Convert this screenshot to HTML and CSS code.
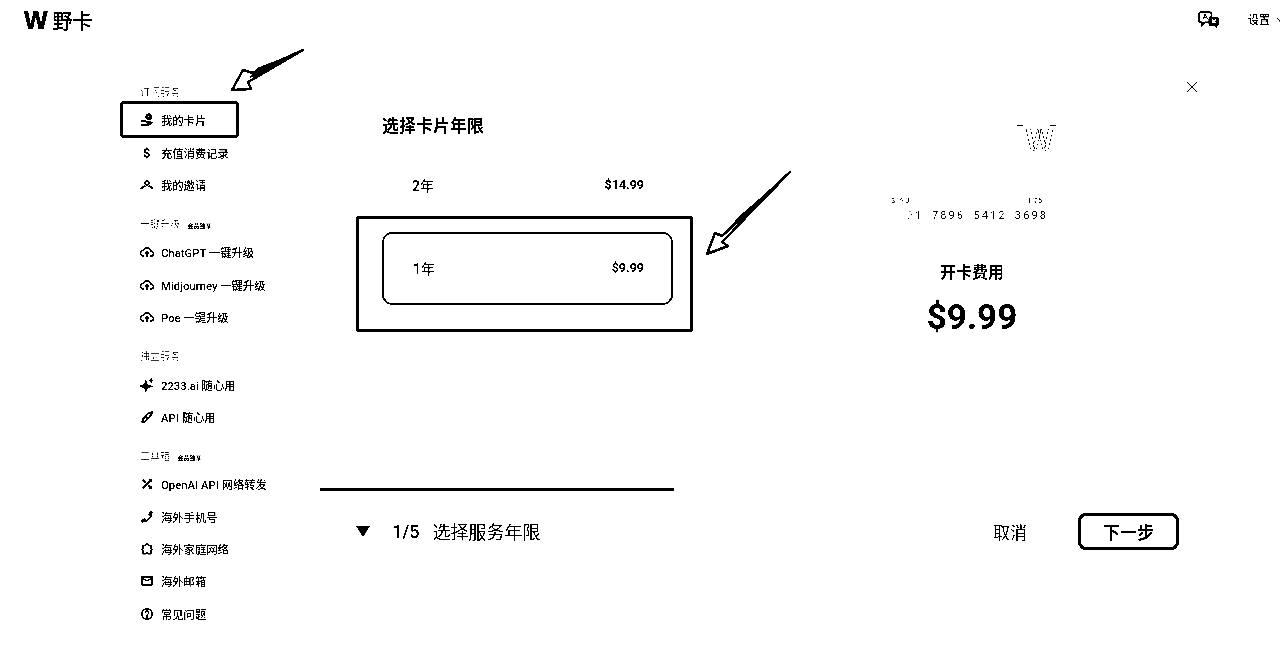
FILE: index.html
```html
<!DOCTYPE html>
<html lang="zh-CN">
<head>
    <meta charset="UTF-8">
    <meta name="viewport" content="width=device-width, initial-scale=1.0">
    <title>野卡</title>
    <link rel="stylesheet" href="styles.css">
</head>
<body>

    <svg class="icon-defs" width="0" height="0">
        <symbol id="i-cloud" viewBox="0 0 24 24"><path d="M19.35 10.04C18.67 6.59 15.64 4 12 4 9.11 4 6.6 5.64 5.35 8.04 2.34 8.36 0 10.91 0 14c0 3.31 2.69 6 6 6h1v-2H6c-2.21 0-4-1.79-4-4 0-2.05 1.53-3.76 3.56-3.97l1.07-.11.5-.95C8.08 7.14 9.94 6 12 6c2.62 0 4.88 1.86 5.39 4.43l.3 1.5 1.53.11c1.56.1 2.78 1.41 2.78 2.96 0 1.65-1.35 3-3 3h-2v2h2c2.76 0 5-2.24 5-5 0-2.64-2.05-4.78-4.65-4.96zM7.5 14h3v7h3v-7h3L12 9.5z"/></symbol>
    </svg>

    <header class="topbar">
        <a class="brand" href="#"><span class="brand-w">W</span><span class="brand-name">野卡</span></a>
        <div class="topbar-right">
            <svg class="lang-icon" viewBox="0 0 22 18">
                <path class="lang-back" d="M3 1h9a2 2 0 0 1 2 2v7a2 2 0 0 1-2 2H7l-3 3v-3H3a2 2 0 0 1-2-2V3a2 2 0 0 1 2-2z"/>
                <path class="lang-a" d="M5 9l2.500-6L10 9M6 7h3"/>
                <path d="M13 6h7a2 2 0 0 1 2 2v6a2 2 0 0 1-2 2v2l-3-2h-4a2 2 0 0 1-2-2V8a2 2 0 0 1 2-2z"/>
                <path class="lang-x" d="M14.500 9l4 4M18.500 9l-4 4"/>
            </svg>
            <span class="settings">设置</span>
            <svg class="chevron" viewBox="0 0 8 6"><path d="M1 1l3 3 3-3"/></svg>
        </div>
    </header>

    <div class="layout">
        <aside class="sidebar">
            <div class="nav-group">
                <div class="nav-label">订阅服务</div>
                <a class="nav-item active" href="#">
                    <svg viewBox="0 0 24 24"><path d="M15 1a5.500 5.500 0 1 1 0 11 5.500 5.500 0 0 1 0-11zm-1 2.500v5h2v-5z" fill-rule="evenodd"/><path d="M2 12h6l4 2.500h6v2.500h-7l-1.500-1L8 15H2zM2 19h8l5-1.500 6-2.500 1 2-7 4.500H2z"/></svg>
                    我的卡片
                </a>
                <a class="nav-item" href="#">
                    <svg viewBox="0 0 24 24"><path d="M11.800 10.900c-2.270-.590-3-1.200-3-2.150 0-1.090 1.010-1.850 2.700-1.850 1.780 0 2.440.850 2.500 2.100h2.210c-.070-1.720-1.120-3.300-3.210-3.810V3h-3v2.160c-1.940.420-3.500 1.680-3.500 3.610 0 2.310 1.910 3.460 4.700 4.130 2.500.600 3 1.480 3 2.410 0 .690-.490 1.790-2.700 1.790-2.060 0-2.870-.920-2.980-2.100h-2.200c.120 2.190 1.760 3.420 3.680 3.830V21h3v-2.150c1.950-.370 3.500-1.500 3.500-3.550 0-2.840-2.430-3.810-4.700-4.400z"/></svg>
                    充值消费记录
                </a>
                <a class="nav-item" href="#">
                    <svg viewBox="0 0 24 24"><path d="M12 4a4.500 4.500 0 1 1 0 9 4.500 4.500 0 0 1 0-9zm0 2.200a2.300 2.300 0 1 0 0 4.600 2.300 2.300 0 0 0 0-4.600zM1 19c.5-3.500 3-5.500 7-6l1.500 2c-2.500.4-4.800 1.600-5.500 4zm22 0c-.5-3.500-3-5.500-7-6l-1.500 2c2.500.4 4.800 1.600 5.500 4z"/></svg>
                    我的邀请
                </a>
            </div>

            <div class="nav-group">
                <div class="nav-label">一键升级 <span class="vip-tag">会员独享</span></div>
                <a class="nav-item" href="#"><svg viewBox="0 0 24 24"><use href="#i-cloud"/></svg>ChatGPT 一键升级</a>
                <a class="nav-item" href="#"><svg viewBox="0 0 24 24"><use href="#i-cloud"/></svg>Midjourney 一键升级</a>
                <a class="nav-item" href="#"><svg viewBox="0 0 24 24"><use href="#i-cloud"/></svg>Poe 一键升级</a>
            </div>

            <div class="nav-group">
                <div class="nav-label">独立服务</div>
                <a class="nav-item" href="#">
                    <svg viewBox="0 0 24 24"><path d="M10 3l3 8 9 3-9 3-3 7-3-7-9-3 9-3zM19 0l1.200 3 3 1.200-3 1.200L19 8.500l-1.200-3.100-3-1.200 3-1.200z"/></svg>
                    2233.ai 随心用
                </a>
                <a class="nav-item" href="#">
                    <svg class="line" viewBox="0 0 24 24"><path d="M21 3c-5 1-9 4-12 8l4 4c4-3 7-7 8-12zM9 13c-3 0-4 2-4 4 0 1-1 2-2 3 3 1 7 0 8-3 .4-1.300 0-2-.5-2.500"/></svg>
                    API 随心用
                </a>
            </div>

            <div class="nav-group">
                <div class="nav-label">工具箱 <span class="vip-tag">会员独享</span></div>
                <a class="nav-item" href="#">
                    <svg viewBox="0 0 24 24"><path d="M10.590 9.170L5.410 4 4 5.410l5.170 5.170 1.420-1.410zM14.500 4l2.040 2.040L4 18.590 5.410 20 17.960 7.460 20 9.500V4h-5.500zm.330 9.410l-1.410 1.410 3.130 3.130L14.500 20H20v-5.500l-2.040 2.040-3.130-3.130z"/></svg>
                    OpenAI API 网络转发
                </a>
                <a class="nav-item" href="#">
                    <svg class="flip" viewBox="0 0 24 24"><path d="M6.540 5c.060.890.210 1.760.450 2.590l-1.200 1.200c-.410-1.200-.670-2.470-.760-3.790h1.510m9.860 12.020c.850.240 1.720.390 2.600.450v1.490c-1.320-.090-2.590-.350-3.800-.750l1.200-1.190M7.500 3H4c-.550 0-1 .450-1 1 0 9.390 7.610 17 17 17 .550 0 1-.450 1-1v-3.490c0-.550-.450-1-1-1-1.240 0-2.450-.200-3.570-.570-.100-.040-.210-.050-.310-.050-.260 0-.510.100-.710.290l-2.200 2.200c-2.830-1.450-5.150-3.760-6.590-6.590l2.200-2.200c.280-.280.360-.670.250-1.020C8.700 6.450 8.500 5.250 8.500 4c0-.550-.450-1-1-1z"/></svg>
                    海外手机号
                </a>
                <a class="nav-item" href="#">
                    <svg class="line" viewBox="0 0 24 24"><path d="M12 3l3 3h4v5l2 2-2 2v5h-5l-2-2-2 2H5v-5l-2-2 2-2V6h4z"/></svg>
                    海外家庭网络
                </a>
                <a class="nav-item" href="#">
                    <svg viewBox="0 0 24 24"><path d="M20 4H4c-1.100 0-1.990.900-1.990 2L2 18c0 1.100.900 2 2 2h16c1.100 0 2-.900 2-2V6c0-1.100-.900-2-2-2zm0 14H4V8l8 5 8-5v10zm-8-7L4 6h16l-8 5z"/></svg>
                    海外邮箱
                </a>
                <a class="nav-item" href="#">
                    <svg viewBox="0 0 24 24"><path d="M11 18h2v-2h-2v2zm1-16C6.480 2 2 6.480 2 12s4.480 10 10 10 10-4.480 10-10S17.520 2 12 2zm0 18c-4.410 0-8-3.590-8-8s3.590-8 8-8 8 3.590 8 8-3.590 8-8 8zm0-14c-2.210 0-4 1.790-4 4h2c0-1.100.900-2 2-2s2 .900 2 2c0 2-3 1.750-3 5h2c0-2.250 3-2.500 3-5 0-2.210-1.790-4-4-4z"/></svg>
                    常见问题
                </a>
            </div>
        </aside>

        <main class="dialog">
            <div class="dialog-body">
                <section class="years">
                    <h2 class="years-title">选择卡片年限</h2>
                    <div class="option"><span class="option-name">2年</span><span class="option-price">$14.99</span></div>
                    <div class="option selected">
                        <span class="option-name">1年</span><span class="option-price">$9.99</span>
                        <div class="mark-box"></div>
                    </div>
                </section>

                <section class="summary">
                    <svg class="close" viewBox="0 0 12 12"><path d="M1 1l10 10M11 1L1 11"/></svg>
                    <div class="card">
                        <div class="card-logo"><span class="card-w">W</span></div>
                        <div class="card-meta"><span>S/ 9 JI</span><span>1/25</span></div>
                        <div class="card-number"><span class="faint">2</span>1 <span>7896</span> <span>5412</span> <span>3698</span></div>
                    </div>
                    <div class="fee-label">开卡费用</div>
                    <div class="fee-price">$9.99</div>
                </section>
            </div>

            <footer class="dialog-footer">
                <span class="step-arrow"></span>
                <span class="step-num">1/5</span>
                <span class="step-name">选择服务年限</span>
                <a class="btn-cancel" href="#">取消</a>
                <button class="btn-next">下一步</button>
            </footer>
        </main>
    </div>

    <!-- annotation arrows -->
    <svg class="arrow arrow-one" viewBox="0 0 80 50">
        <path class="arrow-head" d="M76 3L26 26l-10-3L5 43l19-1-3-7z"/>
        <path d="M76 3L30 21l-8 10 8-2z"/>
    </svg>
    <svg class="arrow arrow-two" viewBox="0 0 90 90">
        <path class="arrow-head" d="M86 3L18 67l-7-3L3 85l21-8-6-4z"/>
        <path d="M86 3L32 50l-3 6 6-2z"/>
    </svg>

</body>
</html>
```

FILE: styles.css
```css
* {
    box-sizing: border-box;
}

html {
    background: #fff;
}

/* the reference is a pure black and white picture */
body {
    margin: 0;
    height: 671px;
    overflow: hidden;
    position: relative;
    background: #fff;
    color: #000;
    font-family: Roboto, "Noto Sans CJK SC", sans-serif;
    filter: grayscale(1) contrast(30);
}

a {
    color: inherit;
    text-decoration: none;
}

svg {
    fill: currentColor;
}

.icon-defs {
    position: absolute;
}

.topbar {
    height: 40px;
    display: flex;
    align-items: center;
    justify-content: space-between;
}

.brand {
    display: flex;
    align-items: center;
    gap: 5px;
    padding-left: 24px;
}

.brand-w {
    font-size: 25px;
    font-weight: 900;
    font-family: "Liberation Sans", sans-serif;
    -webkit-text-stroke: 0.4px #000;
}

.brand-name {
    font-size: 20px;
    font-weight: 500;
}

.topbar-right {
    display: flex;
    align-items: center;
}

.lang-icon {
    width: 21px;
    height: 17px;
    margin-right: 29px;
    margin-top: -2px;
}

.lang-back {
    fill: #fff;
    stroke: #000;
    stroke-width: 1.6;
}

.lang-a {
    fill: none;
    stroke: #000;
}

.lang-x {
    fill: none;
    stroke: #fff;
    stroke-width: 1.4;
}

.settings {
    font-size: 11px;
    font-weight: 500;
    margin-top: -2px;
}

.chevron {
    width: 8px;
    height: 6px;
    margin-left: 6px;
    margin-right: -4px;
    fill: none;
    stroke: #000;
    stroke-width: 1.3;
}

.layout {
    display: flex;
}

.sidebar {
    width: 320px;
    flex-shrink: 0;
    padding: 45px 81px 0 120px;
}

.nav-group {
    margin-bottom: 16px;
}

.nav-label {
    height: 14px;
    line-height: 16px;
    margin-bottom: 5px;
    padding-left: 20px;
    font-size: 10px;
    color: #555;
    white-space: nowrap;
}

.vip-tag {
    font-size: 6px;
    font-weight: 700;
    color: #000;
    margin-left: 5px;
}

.nav-item {
    position: relative;
    height: 32.4px;
    display: flex;
    align-items: center;
    gap: 7px;
    padding-left: 20px;
    font-size: 11.3px;
    font-weight: 500;
    color: #000;
    white-space: nowrap;
}

.nav-item svg {
    width: 14px;
    height: 14px;
    flex-shrink: 0;
    stroke: #000;
    stroke-width: 0.7;
}

.nav-item svg.line {
    fill: none;
    stroke-width: 2.8;
}

.nav-item svg.flip {
    transform: scaleX(-1);
    stroke-width: 1;
}

/* drawn frame round the current item */
.nav-item.active::after {
    content: "";
    position: absolute;
    top: -3px;
    bottom: -2px;
    left: 0;
    right: 0;
    border: 3px solid #000;
    border-radius: 4px;
}

.dialog {
    flex: 1;
}

.dialog-body {
    display: flex;
    height: 451px;
}

.years {
    width: 354px;
    flex-shrink: 0;
    padding: 74px 0 0 62px;
    border-bottom: 3px solid #000;
}

.years-title {
    margin: 0 0 11px;
    height: 24px;
    line-height: 24px;
    font-size: 17px;
    font-weight: 700;
}

.option {
    position: relative;
    width: 291px;
    height: 73px;
    margin-bottom: 10px;
    padding: 0 29px 2px 30px;
    display: flex;
    align-items: center;
    justify-content: space-between;
}

.option.selected {
    border: 2px solid #000;
    border-radius: 10px;
    padding: 0 27px 2px 29px;
}

.option-name {
    font-size: 14px;
    font-weight: 500;
}

.option-price {
    font-size: 12.5px;
    font-weight: 700;
}

/* hand drawn frame on top of the selected row */
.mark-box {
    position: absolute;
    top: -18px;
    left: -28px;
    width: 337px;
    height: 116px;
    border: 3px solid #000;
    border-radius: 3px;
}

.summary {
    flex: 1;
    display: flex;
    flex-direction: column;
    align-items: center;
    padding-right: 10px;
}

.close {
    align-self: flex-end;
    width: 12px;
    height: 12px;
    margin: 41px 72px 0 0;
    fill: none;
    stroke: #000;
    stroke-width: 1.2;
    flex-shrink: 0;
}

.card {
    width: 184px;
    height: 108px;
    margin-top: 30px;
    padding: 0 16px 0 11px;
    color: #222;
}

.card-logo {
    height: 74px;
    display: flex;
    justify-content: flex-end;
    margin-right: -8px;
}

.card-w {
    width: 39px;
    height: 30px;
    padding-left: 6px;
    text-align: center;
    font-size: 32px;
    line-height: 30px;
    font-weight: 700;
    color: transparent;
    -webkit-text-stroke: 0.7px #3a3a3a;
    border-top: 2px solid transparent;
    background:
        linear-gradient(#000, #000) 0 0 / 6px 1px no-repeat,
        linear-gradient(#000, #000) 100% 0 / 6px 1px no-repeat;
}

.card-meta {
    display: flex;
    justify-content: space-between;
    padding-right: 6px;
    font-size: 7px;
    line-height: 8px;
}

.card-number {
    margin-top: 4px;
    text-align: right;
    font-size: 11px;
    line-height: 14px;
    letter-spacing: 2.1px;
    word-spacing: 3.5px;
    white-space: nowrap;
    color: #222;
}

.card-number .faint {
    color: #666;
}

.fee-label {
    margin-top: 30px;
    height: 24px;
    line-height: 24px;
    font-size: 16px;
    font-weight: 700;
}

.fee-price {
    margin-top: 11px;
    font-size: 35px;
    line-height: 44px;
    font-weight: 700;
}

.dialog-footer {
    height: 80px;
    display: flex;
    align-items: center;
    padding: 0 101px 0 36px;
}

.step-arrow {
    width: 0;
    height: 0;
    border-left: 7px solid transparent;
    border-right: 7px solid transparent;
    border-top: 11px solid #000;
    margin-right: 22px;
}

.step-num {
    font-size: 18px;
    font-weight: 500;
    margin-right: 13px;
}

.step-name {
    font-size: 18px;
    color: #000;
}

.btn-cancel {
    margin-left: auto;
    font-size: 17px;
    color: #000;
}

.btn-next {
    width: 101px;
    height: 37px;
    margin-left: 51px;
    background: #fff;
    color: #000;
    border: 3px solid #000;
    border-radius: 8px;
    font-family: inherit;
    font-size: 17px;
    font-weight: 700;
}

/* arrows lie over the page, placed where they were drawn */
.arrow {
    position: absolute;
    fill: #000;
}

.arrow-head {
    fill: #fff;
    stroke: #000;
    stroke-width: 2.5;
    stroke-linejoin: round;
}

.arrow-one {
    left: 227px;
    top: 47px;
    width: 80px;
    height: 50px;
}

.arrow-two {
    left: 704px;
    top: 169px;
    width: 90px;
    height: 90px;
}
```
